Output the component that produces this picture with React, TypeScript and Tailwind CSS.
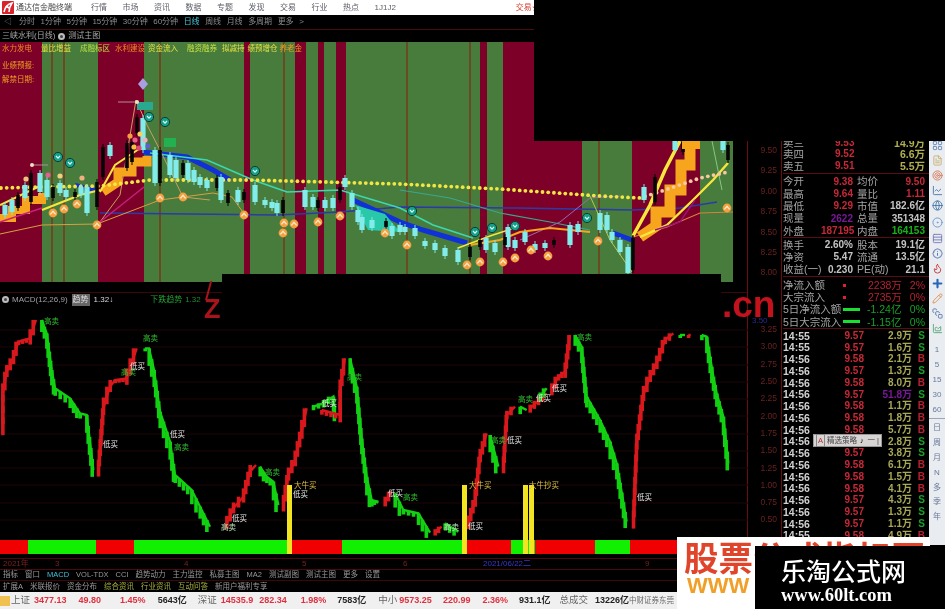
import { BadgeInfo, ChartArea, ChartLine, CircleDot, FileText, Flame, Globe, LayoutGrid, Pencil, Plus, Rows3, SquareStack, Target } from "lucide-react";

type Pt = [number, number];

// zoomed coords -> page coords
const macdSeries: { c: string; off: number; p: number[][] }[] = [
  { c: "#d8181c", off: 0, p: [[8, 385], [8, 285], [20, 215], [40, 175], [55, 125], [90, 115], [108, 60]] },
  { c: "#12d012", off: 0, p: [[125, 60], [140, 100], [155, 210], [165, 265], [210, 295], [240, 340], [260, 345], [280, 510]] },
  { c: "#d8181c", off: 0, p: [[295, 510], [310, 325], [330, 260], [345, 240], [380, 235], [410, 145]] },
  { c: "#12d012", off: 0, p: [[435, 145], [447, 145], [462, 210], [480, 335], [510, 425], [525, 525], [575, 570], [600, 620], [630, 680]] },
  { c: "#d8181c", off: 0, p: [[680, 670], [700, 625], [730, 590], [750, 515], [768, 495]] },
  { c: "#12d012", off: 0, p: [[780, 500], [800, 530], [820, 545], [835, 615]] },
  { c: "#d8181c", off: 0, p: [[850, 615], [865, 525], [885, 480], [905, 395], [920, 325]] },
  { c: "#12d012", off: 0, p: [[940, 320], [970, 310], [1000, 290], [1005, 345]] },
  { c: "#d8181c", off: 0, p: [[965, 330], [1020, 345], [1020, 270], [1035, 175]] },
  { c: "#12d012", off: 0, p: [[1050, 175], [1070, 260], [1085, 415], [1100, 530], [1115, 600], [1135, 608]] },
  { c: "#12d012", off: 370, p: [[0, 600], [25, 605]] },
  { c: "#d8181c", off: 370, p: [[45, 605], [65, 575]] },
  { c: "#12d012", off: 370, p: [[75, 580], [100, 630], [145, 640], [180, 698]] },
  { c: "#d8181c", off: 370, p: [[195, 695], [215, 680]] },
  { c: "#12d012", off: 370, p: [[225, 670], [265, 695]] },
  { c: "#d8181c", off: 370, p: [[295, 670], [315, 600], [330, 470], [350, 400]] },
  { c: "#12d012", off: 370, p: [[360, 405], [385, 500]] },
  { c: "#d8181c", off: 370, p: [[400, 500], [410, 345], [435, 320]] },
  { c: "#12d012", off: 370, p: [[450, 320], [470, 330]] },
  { c: "#d8181c", off: 370, p: [[480, 325], [530, 280]] },
  { c: "#12d012", off: 370, p: [[510, 290], [530, 265]] },
  { c: "#d8181c", off: 370, p: [[545, 270], [565, 230], [585, 215], [600, 105]] },
  { c: "#12d012", off: 370, p: [[615, 105], [635, 140], [650, 290], [690, 360], [720, 425], [740, 490], [770, 665]] },
  { c: "#d8181c", off: 370, p: [[790, 665], [800, 430], [820, 285], [840, 230], [860, 190], [885, 120], [910, 100]] },
  { c: "#12d012", off: 370, p: [[930, 105], [945, 105]] },
  { c: "#d8181c", off: 370, p: [[955, 105], [962, 105]] },
  { c: "#12d012", off: 370, p: [[995, 105], [1010, 110], [1030, 230], [1040, 280], [1060, 350], [1075, 490]] },
];

const macdLabels: [number, number, string, string][] = [
  [44, 324, "高卖", "#2fc02f"], [143, 341, "高卖", "#2fc02f"], [103, 447, "低买", "#e8e8e8"], [121, 375, "高卖", "#2fc02f"],
  [130, 369, "低买", "#e8e8e8"], [170, 437, "低买", "#e8e8e8"], [174, 450, "高卖", "#2fc02f"], [265, 475, "高卖", "#2fc02f"],
  [232, 521, "低买", "#e8e8e8"], [221, 530, "高卖", "#b8e8b8"], [294, 488, "大牛买", "#d8c040"], [293, 497, "低买", "#e8e8e8"],
  [322, 406, "低买", "#e8e8e8"], [347, 380, "高卖", "#2fc02f"], [403, 500, "高卖", "#2fc02f"], [388, 496, "低买", "#e8e8e8"],
  [444, 530, "高卖", "#b8e8b8"], [468, 529, "低买", "#e8e8e8"], [469, 488, "大牛买", "#d8c040"], [529, 488, "大牛抄买", "#d8c040"],
  [507, 443, "低买", "#e8e8e8"], [491, 443, "高卖", "#2fc02f"], [518, 402, "高卖", "#2fc02f"], [536, 401, "低买", "#e8e8e8"],
  [552, 391, "低买", "#e8e8e8"], [577, 340, "高卖", "#2fc02f"], [637, 500, "低买", "#e8e8e8"],
];

const bands: [number, number, string][] = [
  [0, 42, "#7d0029"], [42, 98, "#477c3d"], [98, 144, "#7d0029"], [144, 244, "#477c3d"], [244, 250, "#7d0029"],
  [250, 295, "#477c3d"], [295, 306, "#7d0029"], [306, 318, "#477c3d"], [318, 324, "#7d0029"], [324, 336, "#477c3d"],
  [336, 346, "#7d0029"], [346, 480, "#477c3d"], [480, 487, "#7d0029"], [487, 503, "#477c3d"], [503, 582, "#7d0029"],
  [582, 632, "#477c3d"], [632, 700, "#7d0029"], [700, 733, "#477c3d"],
];

const candles: [number, number, number, string][] = [
  [5, 205, 215, "c"], [12, 200, 212, "c"], [18, 195, 208, "k"], [25, 185, 198, "c"], [31, 173, 202, "k"], [40, 173, 192, "c"], [47, 180, 197, "c"], [53, 187, 198, "k"], [60, 183, 193, "c"], [66, 190, 197, "c"], [75, 192, 197, "k"], [81, 187, 195, "c"],
  [87, 187, 213, "c"], [97, 182, 207, "k"], [103, 147, 177, "k"], [110, 145, 156, "c"], [127, 143, 168, "k"], [132, 142, 162, "k"], [137, 117, 133, "k"],
  [143, 118, 150, "c"], [155, 150, 183, "c"], [160, 150, 183, "k"], [170, 155, 175, "c"], [176, 160, 178, "c"], [183, 163, 175, "k"], [188, 163, 180, "c"], [194, 170, 182, "c"], [200, 177, 185, "c"],
  [207, 180, 188, "c"], [217, 178, 188, "k"], [221, 177, 200, "c"], [228, 193, 203, "k"], [238, 190, 202, "c"], [244, 192, 200, "k"], [255, 185, 202, "c"],
  [265, 200, 205, "c"], [272, 202, 208, "c"], [277, 203, 213, "c"], [283, 200, 213, "k"], [305, 190, 207, "c"], [313, 197, 207, "c"], [318, 200, 208, "k"],
  [325, 200, 208, "c"], [333, 198, 208, "c"], [340, 187, 200, "k"], [345, 178, 187, "c"], [352, 193, 207, "c"], [358, 210, 222, "c"], [362, 217, 230, "c"], [372, 220, 228, "c"],
  [386, 221, 227, "k"], [392, 226, 236, "c"], [400, 225, 232, "c"], [405, 227, 232, "c"], [415, 228, 236, "c"], [425, 241, 246, "c"], [435, 243, 250, "c"], [445, 248, 256, "c"], [458, 250, 262, "c"], [470, 247, 257, "k"],
  [480, 240, 247, "k"], [486, 238, 250, "c"], [495, 243, 252, "c"], [508, 227, 247, "c"], [505, 237, 245, "k"], [515, 240, 248, "c"], [525, 232, 242, "c"], [535, 244, 250, "c"], [545, 243, 248, "c"], [554, 240, 245, "k"], [570, 225, 245, "c"], [578, 224, 232, "c"],
  [600, 213, 230, "c"], [607, 215, 230, "c"], [612, 232, 240, "c"], [620, 240, 252, "c"], [628, 247, 273, "c"], [633, 238, 270, "k"], [644, 187, 200, "c"],
  [655, 177, 202, "k"], [675, 141, 150, "c"], [683, 142, 152, "k"], [723, 141, 150, "c"], [728, 145, 160, "k"],
];

const coins: Pt[] = [
  [53, 213], [64, 209], [77, 204], [97, 225], [160, 198], [183, 197], [244, 215], [283, 233], [284, 223], [294, 224], [318, 222], [340, 216], [385, 233],
  [407, 245], [467, 265], [480, 262], [503, 262], [515, 258], [531, 250], [548, 256], [598, 241], [727, 208],
];

const teals: Pt[] = [[58, 157], [70, 163], [149, 117], [165, 122], [255, 171], [412, 211], [475, 232], [492, 228], [515, 226], [587, 218]];

// colourful clutter around the two tops
const blobs: [number, number, string][] = [
  [130, 136, "#f4a040"], [135, 140, "#e86090"], [140, 134, "#f8d060"], [145, 140, "#f0b0c0"], [148, 146, "#6060c8"], [134, 147, "#f4c040"],
  [139, 148, "#e04878"], [26, 179, "#f0c080"], [48, 175, "#e06090"], [82, 178, "#f0b080"], [60, 176, "#f0d080"],
];

const dotKnots: Pt[] = [[0, 188], [40, 187], [100, 186], [150, 180], [250, 180], [400, 184], [500, 189], [600, 196], [640, 198], [665, 190], [700, 178], [728, 172]];

const dotY = (x: number) => {
  for (let i = 1; i < dotKnots.length; i++) {
    const [x0, y0] = dotKnots[i - 1];
    const [x1, y1] = dotKnots[i];
    if (x <= x1) return y0 + ((x - x0) / (x1 - x0)) * (y1 - y0);
  }
  return 172;
};
const dots = Array.from({ length: 128 }, (_, i) => 1 + i * 5.7);

const pl = (p: number[][]) => p.map((q) => q.join(",")).join(" ");

// one tooth about every 5.5px along the curve
const teeth = (pts: number[][]) => {
  const out: number[][] = [];
  for (let i = 0; i < pts.length - 1; i++) {
    const [x0, y0] = pts[i];
    const [x1, y1] = pts[i + 1];
    const n = Math.max(1, Math.round(Math.hypot((x1 - x0) * 1.2, (y1 - y0) * 0.5) / 5.5));
    for (let k = 0; k < n; k++) {
      out.push([x0 + ((x1 - x0) * k) / n, y0 + ((y1 - y0) * k) / n]);
    }
  }
  out.push(pts[pts.length - 1]);
  return out;
};

function UpperChart() {
  return (
    <svg width={733} height={240} viewBox="0 42 733 240" className="block">
      {bands.map(([a, b, c]) => (
        <rect key={a} x={a} y={42} width={b - a} height={240} fill={c} />
      ))}
      {[52, 64, 160, 284, 407, 470, 599].map((x) => (
        <rect key={x} x={x - 1} y={42} width={2} height={240} fill="#6a4a22" />
      ))}
      {/* moving averages */}
      <polyline points={pl([[100, 213], [277, 215], [340, 212], [400, 207], [517, 208], [633, 210], [680, 208], [717, 202]])} fill="none" stroke="#2c3aa8" strokeWidth={1.5} />
      <polyline points={pl([[0, 234], [42, 225], [97, 224], [160, 200], [213, 193], [232, 197], [245, 215]])} fill="none" stroke="#d8a040" strokeWidth={1} />
      <polyline points={pl([[400, 190], [450, 198], [500, 213], [550, 222], [590, 230]])} fill="none" stroke="#38a890" strokeWidth={1.2} />
      <polyline points={pl([[143, 152], [187, 157], [213, 170], [230, 180]])} fill="none" stroke="#1030d8" strokeWidth={5} />
      <polyline points={pl([[353, 200], [400, 222], [423, 230], [467, 243]])} fill="none" stroke="#1030d8" strokeWidth={5} />
      <polyline points={pl([[613, 233], [632, 240]])} fill="none" stroke="#1030d8" strokeWidth={5} />
      <polyline points={pl([[75, 185], [95, 190]])} fill="none" stroke="#1030d8" strokeWidth={4} />
      <polygon points="355,205 385,214 400,232 368,230" fill="#28c8a8" />
      <polyline points={pl([[150, 153], [207, 160], [253, 180], [287, 192], [340, 190], [400, 208], [433, 225], [473, 238]])} fill="none" stroke="#3cd8b0" strokeWidth={1.6} />
      <polyline points={pl([[520, 240], [560, 222], [590, 198], [620, 196]])} fill="none" stroke="#9a6ab0" strokeWidth={1} />
      <polyline points={pl([[590, 196], [610, 240], [632, 272]])} fill="none" stroke="#b8c848" strokeWidth={1} />
      <polyline points={pl([[97, 226], [120, 195], [136, 100], [147, 125], [160, 150], [183, 197], [210, 200]])} fill="none" stroke="#c8a060" strokeWidth={1} />
      <polyline points={pl([[0, 218], [12, 218], [12, 210], [26, 210], [26, 200], [42, 200], [42, 193]])} fill="none" stroke="#f7a51c" strokeWidth={8} />
      <polyline points={pl([[0, 205], [42, 185]])} fill="none" stroke="#f6e73c" strokeWidth={2} />
      <polyline points={pl([[42, 210], [80, 195], [100, 190]])} fill="none" stroke="#f6e73c" strokeWidth={2.2} />
      <polyline points={pl([[0, 222], [42, 208]])} fill="none" stroke="#c8207a" strokeWidth={1.4} />
      <polyline points={pl([[100, 222], [144, 187]])} fill="none" stroke="#c8207a" strokeWidth={1.4} />
      <polyline points={pl([[103, 192], [118, 182], [118, 172], [132, 172], [132, 162], [147, 162], [147, 156]])} fill="none" stroke="#f7a51c" strokeWidth={9} />
      <polyline points={pl([[100, 192], [115, 165], [130, 155], [145, 145]])} fill="none" stroke="#f6e73c" strokeWidth={2} />
      <polyline points={pl([[470, 245], [500, 240], [520, 232], [550, 228], [590, 232]])} fill="none" stroke="#f7a51c" strokeWidth={2} />
      <polyline points={pl([[458, 248], [490, 236], [520, 226]])} fill="none" stroke="#f6e73c" strokeWidth={1.4} />
      {/* right fan */}
      <polyline points={pl([[633, 237], [650, 232], [667, 227], [700, 213], [733, 212]])} fill="none" stroke="#d88040" strokeWidth={1.2} />
      <polyline points={pl([[640, 237], [656, 226], [656, 212], [670, 212], [670, 190], [681, 190], [681, 165], [690, 165], [690, 141]])} fill="none" stroke="#f7a51c" strokeWidth={11} />
      <polyline points={pl([[633, 236], [650, 205], [665, 170], [680, 141]])} fill="none" stroke="#f6e73c" strokeWidth={3.5} />
      <polyline points={pl([[640, 237], [667, 225], [693, 200], [713, 180], [728, 163]])} fill="none" stroke="#f6e73c" strokeWidth={2.4} />
      <polyline points={pl([[655, 230], [680, 222], [695, 200]])} fill="none" stroke="#a0107a" strokeWidth={1.4} />
      <polyline points={pl([[712, 141], [722, 190]])} fill="none" stroke="#88c880" strokeWidth={1} />
      <polyline points={pl([[32, 165], [48, 165]])} stroke="#b09098" strokeWidth={1} />
      <polyline points={pl([[118, 102], [136, 102]])} stroke="#b09098" strokeWidth={1} />
      <rect x={137} y={102} width={16} height={8} fill="#2aa890" />
      {dots.map((x) => (
        <circle key={x} cx={x} cy={dotY(x)} r={1.9} fill={x > 640 ? "#f8c8a0" : "#f2e642"} />
      ))}
      {candles.map(([x, a, b, t], i) => (
        <g key={i}>
          <line x1={x} x2={x} y1={a - 3} y2={b + 3} stroke={t === "k" ? "#000" : "#7fe8e4"} strokeWidth={1} />
          <rect x={x - (t === "k" ? 1.8 : 2.6)} y={a} width={t === "k" ? 3.6 : 5.2} height={b - a} fill={t === "k" ? "#060606" : "#82ecea"} />
        </g>
      ))}
      {blobs.map(([x, y, c], i) => (
        <circle key={i} cx={x} cy={y} r={2.6} fill={c} />
      ))}
      {coins.map(([x, y], i) => (
        <g key={i}>
          <circle cx={x} cy={y} r={4.4} fill="#f4a040" />
          <path d={`M${x - 2.6} ${y + 1.4} L${x} ${y - 1.6} L${x + 2.6} ${y + 1.4}`} fill="none" stroke="#fbe8c8" strokeWidth={1.4} />
        </g>
      ))}
      {teals.map(([x, y], i) => (
        <g key={i}>
          <circle cx={x} cy={y} r={4.6} fill="#15a08a" stroke="#0e3a34" strokeWidth={1} />
          <path d={`M${x - 2} ${y - 1} L${x} ${y + 1.2} L${x + 2} ${y - 1}`} fill="none" stroke="#d8fff4" strokeWidth={1.2} />
        </g>
      ))}
      <path d="M143 78 L148 84 L143 90 L138 84 Z" fill="#a8a0e0" />
      <circle cx={137} cy={102} r={2} fill="#f0e0c0" />
      <circle cx={32} cy={165} r={2} fill="#f0e0c0" />
      <rect x={164} y={138} width={12} height={9} fill="#22b050" />
      <rect x={682} y={141} width={18} height={8} fill="#f7a51c" />
    </svg>
  );
}

function MacdChart() {
  return (
    <svg width={748} height={234} viewBox="0 306 748 234" className="block">
      {[330, 347, 365, 382, 399, 416, 434, 451, 468, 485, 503, 520].map((y) => (
        <line key={y} x1={0} x2={748} y1={y} y2={y} stroke="#1e0405" strokeWidth={1} />
      ))}
      {macdSeries.map((s, i) => {
        const pts = s.p.map(([x, y]) => [s.off + x / 3, 300 + y / 3]);
        const t = teeth(pts);
        return (
          <g key={i}>
            <polyline points={pl(pts)} fill="none" stroke={s.c} strokeWidth={2.4} />
            {t.slice(0, -1).map(([x, y], k) => {
              const next = t[k + 1];
              const top = Math.min(y, next[1]);
              const h = Math.abs(next[1] - y);
              return <rect key={k} x={x - 1.6} y={top} width={3.6} height={h + 3 + h * 0.35} fill={s.c} />;
            })}
          </g>
        );
      })}
      {[287, 462, 523, 529].map((x) => (
        <rect key={x} x={x} y={485} width={5} height={55} fill="#f2e420" />
      ))}
      {macdLabels.map(([x, y, t, c], i) => (
        <text key={i} x={x} y={y} fontSize={7.5} fill={c}>
          {t}
        </text>
      ))}
    </svg>
  );
}

const sell = [
  ["卖三", "9.53", "14.9万"],
  ["卖四", "9.52", "6.6万"],
  ["卖五", "9.51", "5.5万"],
];
const quote: [string, string, string, string, string, string][] = [
  ["今开", "9.38", "text-[#c82838]", "均价", "9.50", "text-[#c82838]"],
  ["最高", "9.64", "text-[#c82838]", "量比", "1.11", "text-[#c82838]"],
  ["最低", "9.29", "text-[#c82838]", "市值", "182.6亿", "text-[#c4c4c4]"],
  ["现量", "2622", "text-[#7a1898]", "总量", "351348", "text-[#c4c4c4]"],
  ["外盘", "187195", "text-[#c82838]", "内盘", "164153", "text-[#18b018]"],
];
const share: [string, string, string, string][] = [
  ["换手", "2.60%", "股本", "19.1亿"],
  ["净资", "5.47", "流通", "13.5亿"],
  ["收益(一)", "0.230", "PE(动)", "21.1"],
];
const ticks: [string, string, string, string][] = [
  ["14:55", "9.57", "2.9万", "S"], ["14:55", "9.57", "1.6万", "S"], ["14:56", "9.58", "2.1万", "B"], ["14:56", "9.57", "1.3万", "S"],
  ["14:56", "9.58", "8.0万", "B"], ["14:56", "9.57", "51.8万", "S"], ["14:56", "9.58", "1.1万", "B"], ["14:56", "9.58", "1.8万", "B"],
  ["14:56", "9.58", "5.7万", "B"], ["14:56", "9.57", "2.8万", "S"], ["14:56", "9.57", "3.8万", "S"], ["14:56", "9.58", "6.1万", "B"],
  ["14:56", "9.58", "1.5万", "B"], ["14:56", "9.58", "4.1万", "B"], ["14:56", "9.57", "4.3万", "S"], ["14:56", "9.57", "1.3万", "S"],
  ["14:56", "9.57", "1.1万", "S"], ["14:55", "9.58", "4.9万", "B"],
];

function QuotePanel() {
  return (
    <div className="w-[147px] pt-[107px] pl-[1px] text-[10.5px] leading-none text-[#a4a4a4]">
      <div className="border-b border-[#5a0c14] pb-[1px]">
        {sell.map(([a, b, c]) => (
          <div key={a} className="flex h-[11.5px] items-center">
            <span className="w-[52px]">{a}</span>
            <span className="w-[18px] text-[#c82838] font-bold text-[10px]">{b}</span>
            <span className="ml-auto mr-[4px] text-[#b0b050] font-bold">{c}</span>
          </div>
        ))}
      </div>
      <div className="border-b border-[#5a0c14] pt-[2px]">
        {quote.map(([a, b, bc, c, d, dc]) => (
          <div key={a} className="flex h-[12.3px] items-center">
            <span className="w-[38px]">{a}</span>
            <span className={`w-[32px] text-right font-bold text-[10px] ${bc}`}>{b}</span>
            <span className="ml-[4px]">{c}</span>
            <span className={`ml-auto mr-[4px] font-bold text-[10px] ${dc}`}>{d}</span>
          </div>
        ))}
      </div>
      <div className="border-b border-[#5a0c14] pt-[1px]">
        {share.map(([a, b, c, d]) => (
          <div key={a} className="flex h-[12.3px] items-center">
            <span className="w-[38px] whitespace-nowrap">{a}</span>
            <span className="w-[32px] text-right font-bold text-[10px] text-[#c4c4c4]">{b}</span>
            <span className="ml-[4px] whitespace-nowrap">{c}</span>
            <span className="ml-auto mr-[4px] font-bold text-[10px] text-[#c4c4c4]">{d}</span>
          </div>
        ))}
      </div>
      <div className="border-b border-[#5a0c14] pt-[2px]">
        <div className="flex h-[12.3px] items-center">
          <span className="w-[60px]">净流入额</span>
          <span className="h-[3px] w-[3px] bg-[#e02030]" />
          <span className="ml-[22px] text-[#b82030]">2238万</span>
          <span className="ml-auto mr-[4px] text-[#b82030]">2%</span>
        </div>
        <div className="flex h-[12.3px] items-center">
          <span className="w-[60px]">大宗流入</span>
          <span className="h-[3px] w-[3px] bg-[#e02030]" />
          <span className="ml-[22px] text-[#b82030]">2735万</span>
          <span className="ml-auto mr-[4px] text-[#b82030]">0%</span>
        </div>
        <div className="flex h-[12.3px] items-center">
          <span className="w-[60px] whitespace-nowrap">5日净流入额</span>
          <span className="h-[3px] w-[17px] bg-[#18e030]" />
          <span className="ml-[7px] text-[#18a028]">-1.24亿</span>
          <span className="ml-auto mr-[4px] text-[#18a028]">0%</span>
        </div>
        <div className="flex h-[12.3px] items-center">
          <span className="w-[60px] whitespace-nowrap">5日大宗流入</span>
          <span className="h-[3px] w-[17px] bg-[#18e030]" />
          <span className="ml-[7px] text-[#18a028]">-1.15亿</span>
          <span className="ml-auto mr-[4px] text-[#18a028]">0%</span>
        </div>
      </div>
      <div className="pt-[1px]">
        {ticks.map(([t, p, v, s], i) => (
          <div key={i} className="flex h-[11.75px] items-center font-bold">
            <span className="w-[40px] text-[#d0d0d0]">{t}</span>
            <span className="w-[41px] text-right text-[10px] text-[#c82838]">{p}</span>
            <span className={`w-[48px] text-right text-[10px] ${v === "51.8万" ? "text-[#7a1898]" : "text-[#a8a858]"}`}>{v}</span>
            <span className={`w-[13px] text-right text-[10px] ${s === "S" ? "text-[#18a028]" : "text-[#b82030]"}`}>{s}</span>
          </div>
        ))}
      </div>
    </div>
  );
}

const sideIcons = [
  <LayoutGrid size={11} key="a" className="text-[#6a8ab8]" />,
  <FileText size={11} key="b" className="text-[#c8b070]" />,
  <Target size={11} key="c" className="text-[#d87858]" />,
  <ChartLine size={11} key="d" className="text-[#4878a8]" />,
  <Globe size={11} key="e" className="text-[#4878a8]" />,
  <CircleDot size={11} key="f" className="text-[#6898c8]" />,
  <Rows3 size={11} key="g" className="text-[#7878b8]" />,
  <BadgeInfo size={11} key="h" className="text-[#4868a8]" />,
  <Flame size={11} key="i" className="text-[#c83838]" />,
  <Plus size={13} strokeWidth={4} key="j" className="text-[#2868b8]" />,
  <Pencil size={11} key="k" className="text-[#e09050]" />,
  <SquareStack size={11} key="l" className="text-[#5878a8]" />,
  <ChartArea size={11} key="m" className="text-[#58a878]" />,
];

function SideStrip() {
  return (
    <div className="flex h-[515px] w-[16px] flex-col items-center bg-[#e9edf2] pt-[108px] text-[8px] leading-none text-[#6a7a96]">
      {sideIcons.map((ic, i) => (
        <div key={i} className={`flex items-center justify-center ${i === 5 ? "h-[18px]" : "h-[15px]"}`}>
          {ic}
        </div>
      ))}
      <div className="mt-[6px] flex flex-col items-center">
        {["1", "5", "15", "30", "60"].map((t) => (
          <div key={t} className="flex h-[15px] items-center">
            {t}
          </div>
        ))}
      </div>
      <div className="mb-[2px] mt-[1px] w-full border-t border-[#9aa6ba]" />
      {["日", "周", "月", "N", "多", "季", "年"].map((t) => (
        <div key={t} className="flex h-[14.8px] items-center">
          {t}
        </div>
      ))}
    </div>
  );
}

function Axis() {
  return (
    <div className="w-[34px] border-r border-[#6a0c10] pt-[110px] pr-[4px] text-right text-[8.5px] leading-none text-[#6a2020]">
      {["9.50", "9.25", "9.00", "8.75", "8.50", "8.25", "8.00"].map((t) => (
        <div key={t} className="flex h-[20.4px] items-center justify-end">
          {t}
        </div>
      ))}
      <div className="h-[38px]" />
      {["3.25", "3.00", "2.75", "2.50", "2.25", "2.00", "1.75", "1.50", "1.25", "1.00", "0.75", "0.50"].map((t) => (
        <div key={t} className="flex h-[17.3px] items-center justify-end">
          {t}
        </div>
      ))}
    </div>
  );
}

export default function App() {
  return (
    <div className="relative flex h-[609px] w-[945px] flex-col overflow-hidden bg-black font-['Liberation_Sans','Noto_Sans_CJK_SC',sans-serif] blur-[0.6px]">
      {/* title bar */}
      <div className="flex h-[15px] items-center bg-white text-[8px] text-[#5c6068]">
        <svg width={12} height={13} viewBox="0 0 12 13" className="ml-[2px]">
          <rect width={12} height={13} rx={1} fill="#d8222c" />
          <path d="M2 11 C3 6 6 3 10 2 C8 5 7 8 7 11 M4 5 L7 7" fill="none" stroke="#fff" strokeWidth={1.6} />
        </svg>
        <span className="ml-[2px] w-[75px] text-[#444]">通达信金融终端</span>
        <div className="flex gap-[15.5px]">
          {["行情", "市场", "资讯", "数据", "专题", "发现", "交易", "行业", "热点", "1J1J2"].map((t) => (
            <span key={t}>{t}</span>
          ))}
        </div>
        <span className="ml-[120px] whitespace-nowrap text-[#d84030]">交易★</span>
      </div>
      {/* period toolbar */}
      <div className="flex h-[15px] items-center gap-[5.5px] border-b border-[#4a0a10] pl-[4px] text-[8px] text-[#8a8a8a]">
        <span className="w-[9.5px] text-[#777]">◁</span>
        <span>分时</span>
        <span>1分钟</span>
        <span>5分钟</span>
        <span>15分钟</span>
        <span>30分钟</span>
        <span>60分钟</span>
        <span className="text-[#48c8d8]">日线</span>
        <span>周线</span>
        <span>月线</span>
        <span>多周期</span>
        <span>更多</span>
        <span>&gt;</span>
      </div>
      <div className="flex h-[562px]">
        <div className="flex w-[748px] flex-col border-r border-[#6a0c10]">
          <div className="flex h-[12px] items-center pl-[2px] text-[8px] text-[#a8a8a8]">
            <span>三峡水利(日线)</span>
            <span className="ml-[3px] h-[7px] w-[7px] rounded-full border-2 border-[#bbb] bg-[#444]" />
            <span className="ml-[3px]">测试主图</span>
          </div>
          <div className="relative h-[240px] w-[733px]">
            <UpperChart />
            <div className="absolute left-[2px] top-[2px] flex text-[7.5px] leading-[10px]">
              <span className="text-[#f08a20]">水力发电</span>
              <span className="ml-[9px] text-[#e8e040]">量比增益</span>
              <span className="ml-[9px] text-[#b8e040]">成融标区</span>
              <span className="ml-[5px] text-[#f08a20]">水利建设</span>
              <span className="ml-[3px] text-[#e8e040]">资金流入</span>
              <span className="ml-[9px] text-[#c8e040]">融资融券</span>
              <span className="ml-[5px] text-[#e8e040]">拟减持</span>
              <span className="ml-[3px] text-[#e8e040]">绩预增仓</span>
              <span className="ml-[2px] text-[#f0a020]">养老金</span>
            </div>
            <div className="absolute left-[2px] top-[18px] text-[7.5px] text-[#f0a020]">业绩预报:</div>
            <div className="absolute left-[2px] top-[32px] text-[7.5px] text-[#f0a020]">解禁日期:</div>
          </div>
          <div className="mt-[10px] flex h-[14px] items-center border-t border-[#3a0808] pl-[2px] text-[8px] text-[#a0a0a0]">
            <span className="h-[7px] w-[7px] rounded-full border-2 border-[#bbb] bg-[#444]" />
            <span className="ml-[3px]">MACD(12,26,9)</span>
            <span className="ml-[4px] bg-[#666] px-[1px] text-[#ddd]">趋势</span>
            <span className="ml-[4px] text-[#d8d8d8]">1.32↓</span>
            <span className="ml-[37px] text-[#20a030]">下跌趋势</span>
            <span className="ml-[3px] text-[#208a30]">1.32</span>
          </div>
          <MacdChart />
          <div className="flex h-[14px] w-[748px]">
            <div className="w-[28px] bg-[#f00000]" />
            <div className="w-[68px] bg-[#10f000]" />
            <div className="w-[38px] bg-[#f00000]" />
            <div className="w-[153px] bg-[#10f000]" />
            <div className="w-[5px] bg-[#f2e420]" />
            <div className="w-[50px] bg-[#f00000]" />
            <div className="w-[120px] bg-[#10f000]" />
            <div className="w-[5px] bg-[#f2e420]" />
            <div className="w-[44px] bg-[#f00000]" />
            <div className="w-[12px] bg-[#10f000]" />
            <div className="w-[5px] bg-[#f2e420]" />
            <div className="w-[1px] bg-[#10f000]" />
            <div className="w-[5px] bg-[#f2e420]" />
            <div className="w-[1px] bg-[#10f000]" />
            <div className="w-[60px] bg-[#f00000]" />
            <div className="w-[35px] bg-[#10f000]" />
            <div className="flex-1 bg-[#f00000]" />
          </div>
          <div className="mt-[4px] flex h-[12px] items-center border-y border-[#4a0a10] pl-[3px] text-[8px] text-[#7a2020]">
            <span className="w-[52px]">2021年</span>
            <span className="w-[129px]">3</span>
            <span className="w-[118px]">4</span>
            <span className="w-[101px]">5</span>
            <span className="w-[80px]">6</span>
            <span className="w-[162px] text-[#3838c8]">2021/06/22二</span>
            <span>9</span>
          </div>
          <div className="flex h-[11px] items-center gap-[7px] border-b border-[#3a0808] pl-[3px] text-[7.5px] text-[#989898]">
            <span>指标</span>
            <span>窗口</span>
            <span className="text-[#40c0d8]">MACD</span>
            <span>VOL-TDX</span>
            <span>CCI</span>
            <span>趋势动力</span>
            <span>主力监控</span>
            <span>私募主图</span>
            <span>MA2</span>
            <span>测试副图</span>
            <span>测试主图</span>
            <span>更多</span>
            <span>设置</span>
          </div>
          <div className="flex h-[11px] items-center gap-[7px] pl-[3px] text-[7.5px] text-[#989898]">
            <span>扩展A</span>
            <span>米联报价</span>
            <span>资金分布</span>
            <span className="text-[#a8b040]">综合资讯</span>
            <span className="text-[#a8b040]">行业资讯</span>
            <span className="text-[#a8b040]">互动问答</span>
            <span>新用户福利专享</span>
          </div>
        </div>
        <Axis />
        <QuotePanel />
        <SideStrip />
      </div>
      {/* index bar */}
      <div className="flex h-[17px] items-center bg-[#f0f0f0] text-[9px] font-bold whitespace-nowrap text-[#e03040]">
        <span className="h-[10px] w-[10px] bg-[#f0c050]" />
        <span className="ml-[1px] text-[9.5px] font-normal text-[#666]">上证</span>
        <span className="ml-[4px]">3477.13</span>
        <span className="ml-[12px]">49.80</span>
        <span className="ml-[19px]">1.45%</span>
        <span className="ml-[12px] text-[#222]">5643亿</span>
        <span className="ml-[11px] text-[9.5px] font-normal text-[#666]">深证</span>
        <span className="ml-[4px]">14535.9</span>
        <span className="ml-[6px]">282.34</span>
        <span className="ml-[14px]">1.98%</span>
        <span className="ml-[11px] text-[#222]">7583亿</span>
        <span className="ml-[12px] text-[9.5px] font-normal text-[#666]">中小</span>
        <span className="ml-[2px]">9573.25</span>
        <span className="ml-[11px]">220.99</span>
        <span className="ml-[12px]">2.36%</span>
        <span className="ml-[11px] text-[#222]">931.1亿</span>
        <span className="ml-[9px] text-[9.5px] font-normal text-[#666]">总成交</span>
        <span className="ml-[7px] text-[#222]">13226亿</span>
        <span className="text-[7.5px] font-normal text-[#666]">中财证券东莞</span>
      </div>

      {/* watermark fragments that sit on the charts */}
      <span className="absolute left-[205px] top-[278px] text-[26px] leading-none text-[#a8141c]">/</span>
      <span className="absolute left-[204px] top-[296px] text-[27px] leading-none font-bold text-[#a8141c]">Z</span>
      <span className="absolute left-[722px] top-[286px] text-[37px] leading-none font-bold text-[#c4121c]">.cn</span>
      <span className="absolute left-[752px] top-[317px] text-[8px] leading-none text-[#2a2a90]">3.50</span>

      {/* cover-ups over the screenshot */}
      <div className="absolute left-[534px] top-0 h-[141px] w-[411px] bg-black" />
      <div className="absolute left-[222px] top-[274px] h-[46px] w-[499px] bg-black" />

      {/* small popup */}
      <div className="absolute left-[813px] top-[434px] flex h-[13px] w-[69px] items-center border border-[#999] bg-[#d8d4d4] px-[2px] text-[7.5px] text-[#444]">
        <span className="border border-[#888] px-[1px] text-[#b03030]">A</span>
        <span className="ml-[2px]">精选策略</span>
        <span className="ml-[3px] text-[#111]">♪</span>
        <span className="ml-auto">一 |</span>
      </div>

      {/* ad banner */}
      <div className="absolute left-[677px] top-[537px] h-[72px] w-[253px] overflow-hidden bg-white">
        <div className="ml-[7px] mt-[3px] text-[34.5px] leading-[38px] font-bold whitespace-nowrap text-[#e0452c]">股票公式指标网</div>
        <div className="ml-[10px] text-[22px] leading-[16px] font-bold text-[#f0a028]">WWW</div>
      </div>
      <div className="absolute bottom-0 left-[755px] flex h-[63px] w-[190px] flex-col items-start bg-black pl-[26px] pt-[8px] text-white">
        <span className="text-[25px] leading-[32px] font-['Noto_Sans_CJK_SC',sans-serif] font-medium whitespace-nowrap">乐淘公式网</span>
        <span className="text-[18.5px] leading-[18px] font-bold font-['Liberation_Serif',serif]">www.60lt.com</span>
      </div>
    </div>
  );
}
